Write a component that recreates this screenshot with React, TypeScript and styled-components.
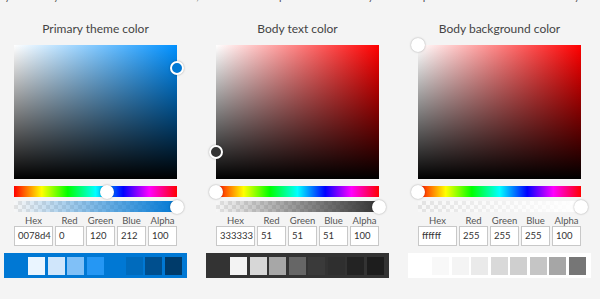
import React from "react";
import styled, { createGlobalStyle } from "styled-components";

const GlobalStyle = createGlobalStyle`
  html, body {
    margin: 0;
    padding: 0;
    background: #f4f4f4;
    overflow: hidden;
  }
  body {
    font-family: Lato, "Open Sans", sans-serif;
    color: #333333;
  }
`;

interface PickerType {
  title: string;
  hex: string;
  rgb: [number, number, number];
  hue: number;
  sat: number;
  val: number;
  swatches: string[];
}

const HUE_GRADIENT =
  "linear-gradient(to right, #ff0000 0%, #ffff00 17%, #00ff00 33%, #00ffff 50%, #0000ff 67%, #ff00ff 83%, #ff0000 100%)";

const pickers: PickerType[] = [
  {
    title: "Primary theme color",
    hex: "0078d4",
    rgb: [0, 120, 212],
    hue: 206,
    sat: 1,
    val: 0.83,
    swatches: ["#eaf5ff", "#d0e6fb", "#80c0f7", "#2597f4", "#0078d4", "#006bbd", "#004f8e", "#003b6a"],
  },
  {
    title: "Body text color",
    hex: "333333",
    rgb: [51, 51, 51],
    hue: 0,
    sat: 0,
    val: 0.2,
    swatches: ["#f3f3f3", "#d7d7d7", "#a7a7a7", "#666666", "#3a3a3a", "#2f2f2f", "#232323", "#1d1d1d"],
  },
  {
    title: "Body background color",
    hex: "ffffff",
    rgb: [255, 255, 255],
    hue: 0,
    sat: 0,
    val: 1,
    swatches: ["#f8f8f8", "#f4f4f4", "#eaeaea", "#d9d9d9", "#cfcfcf", "#c5c5c5", "#a6a6a6", "#767676"],
  },
];

export default function App() {
  return (
    <Page>
      <GlobalStyle />
      <Intro>
        As you modify one of the three base colors, the theme will update automatically based on predefined rules. You can modify each individual slot below as well.
      </Intro>
      <Columns>
        {pickers.map((p) => {
          const color = `#${p.hex}`;
          return (
            <Column key={p.title}>
              <Title>{p.title}</Title>
              <PickerBody>
                <Square $hue={p.hue}>
                  <Thumb
                    $fill={color}
                    style={{ left: `${p.sat * 100}%`, top: `${(1 - p.val) * 100}%` }}
                  />
                </Square>
                <HueBar>
                  <Thumb $fill="#ffffff" style={{ left: `${(p.hue / 360) * 100}%`, top: "50%" }} />
                </HueBar>
                <AlphaBar $color={color}>
                  <Thumb $fill="#ffffff" style={{ left: "100%", top: "50%" }} />
                </AlphaBar>
                <Fields>
                  <FieldLabel>Hex</FieldLabel>
                  <FieldLabel>Red</FieldLabel>
                  <FieldLabel>Green</FieldLabel>
                  <FieldLabel>Blue</FieldLabel>
                  <FieldLabel>Alpha</FieldLabel>
                  <FieldBox>{p.hex}</FieldBox>
                  <FieldBox>{p.rgb[0]}</FieldBox>
                  <FieldBox>{p.rgb[1]}</FieldBox>
                  <FieldBox>{p.rgb[2]}</FieldBox>
                  <FieldBox>100</FieldBox>
                </Fields>
              </PickerBody>
              <SwatchBar $color={color}>
                {p.swatches.map((s, i) => (
                  <Swatch key={i} $color={s} />
                ))}
              </SwatchBar>
            </Column>
          );
        })}
      </Columns>
    </Page>
  );
}

const Page = styled.div`
  width: 600px;
  height: 299px;
  overflow: hidden;
`;

const Intro = styled.p`
  margin: -11px 0 0 -10px;
  white-space: nowrap;
  font-size: 11px;
  line-height: 14px;
  color: #555555;
`;

const Columns = styled.div`
  display: grid;
  grid-template-columns: repeat(3, 183px);
  column-gap: 19px;
  padding: 0 0 0 4px;
  margin-top: 18px;
`;

const Column = styled.div`
  display: flex;
  flex-direction: column;
`;

const Title = styled.div`
  font-size: 12px;
  line-height: 16px;
  height: 16px;
  text-align: center;
  color: #444444;
`;

const PickerBody = styled.div`
  display: flex;
  flex-direction: column;
  padding: 0 10px;
  margin-top: 8px;
`;

const Square = styled.div<{ $hue: number }>`
  position: relative;
  height: 134px;
  background:
    linear-gradient(to top, #000000, rgba(0, 0, 0, 0)),
    linear-gradient(to right, #ffffff, hsl(${(p) => p.$hue}, 100%, 50%));
`;

const Thumb = styled.span<{ $fill: string }>`
  position: absolute;
  width: 10px;
  height: 10px;
  border: 2px solid #ffffff;
  border-radius: 50%;
  background: ${(p) => p.$fill};
  box-shadow: 0 0 2px rgba(0, 0, 0, 0.35);
  transform: translate(-50%, -50%);
`;

const HueBar = styled.div`
  position: relative;
  height: 11px;
  margin-top: 7px;
  background: ${HUE_GRADIENT};
`;

const AlphaBar = styled.div<{ $color: string }>`
  position: relative;
  height: 11px;
  margin-top: 4px;
  background:
    linear-gradient(to right, rgba(255, 255, 255, 0), ${(p) => p.$color}),
    repeating-conic-gradient(#e2e2e2 0% 25%, #f7f7f7 0% 50%) 0 0 / 8px 8px;
`;

const Fields = styled.div`
  display: grid;
  grid-template-columns: 39px repeat(4, 1fr);
  grid-template-rows: 11px 20px;
  column-gap: 2px;
  margin-top: 3px;
`;

const FieldLabel = styled.div`
  font-size: 9.5px;
  line-height: 11px;
  text-align: center;
  color: #555555;
`;

const FieldBox = styled.div`
  box-sizing: border-box;
  height: 20px;
  padding: 0 3px;
  border: 1px solid #c8c8c8;
  background: #ffffff;
  font-size: 9.5px;
  line-height: 18px;
  color: #333333;
`;

const SwatchBar = styled.div<{ $color: string }>`
  display: flex;
  gap: 2.5px;
  height: 25px;
  box-sizing: border-box;
  padding: 4px 5px 3px 24px;
  margin-top: 7px;
  background: ${(p) => p.$color};
`;

const Swatch = styled.div<{ $color: string }>`
  flex: 1;
  background: ${(p) => p.$color};
`;
